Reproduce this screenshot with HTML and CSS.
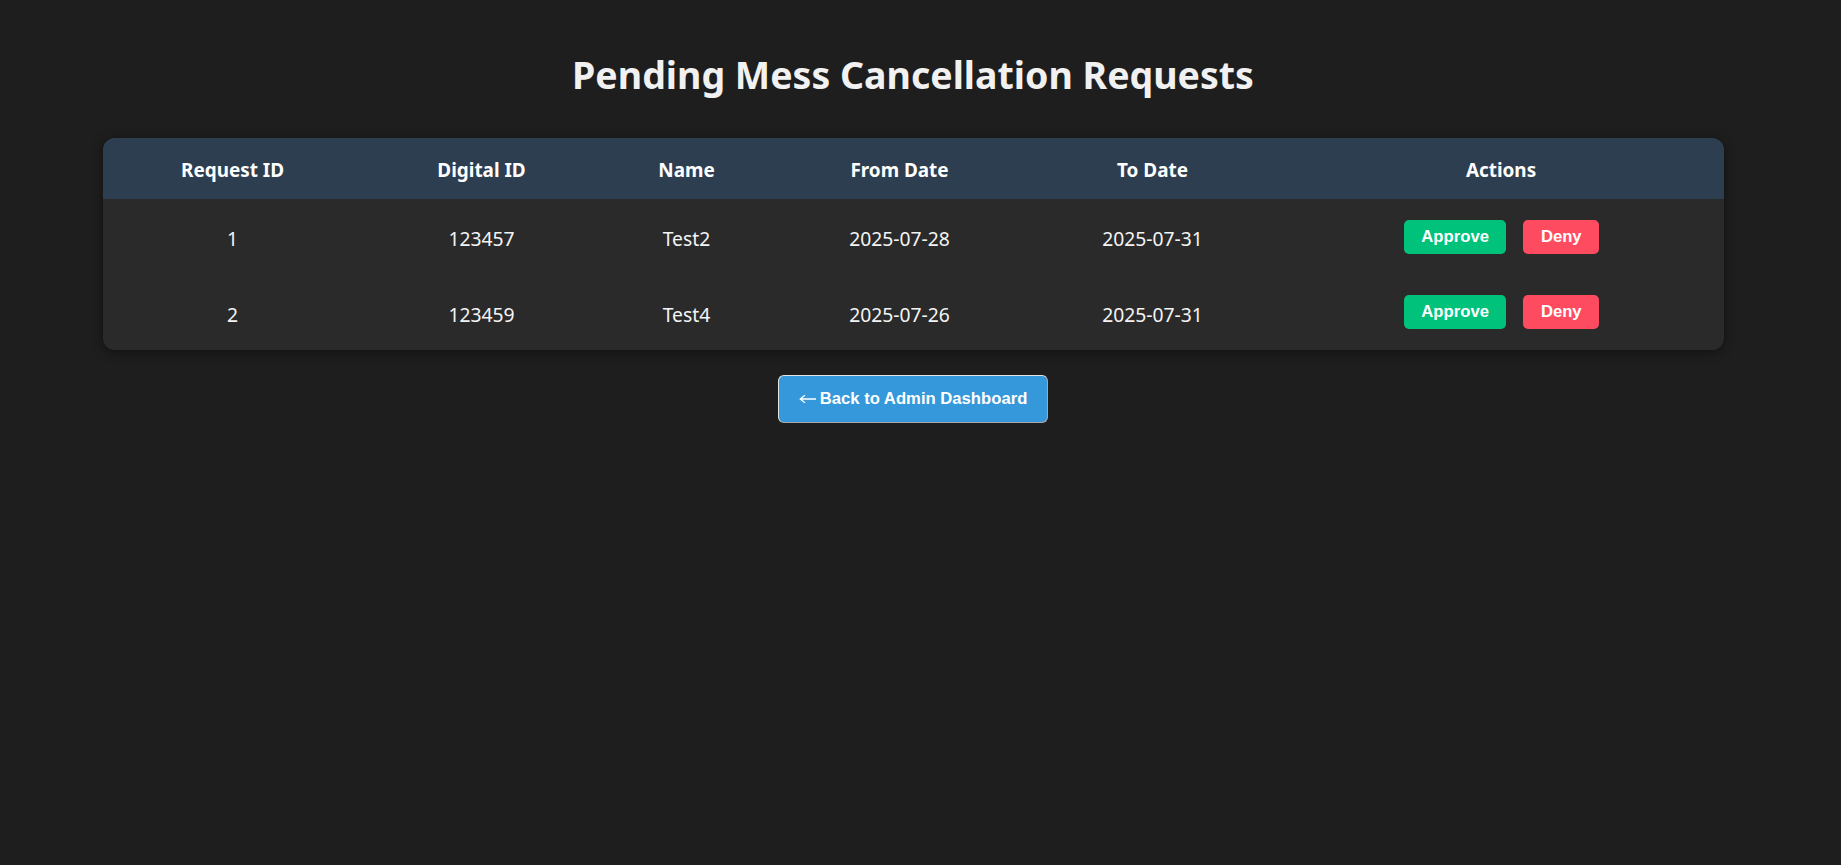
FILE: index.html
```html
<!DOCTYPE html>
<html lang="en">
<head>
<meta charset="utf-8">
<title>Pending Mess Cancellation Requests</title>
<link rel="stylesheet" href="styles.css">
</head>
<body>
<div class="page">
  <h1 class="title">Pending Mess Cancellation Requests</h1>
  <table class="requests">
    <colgroup>
      <col class="c1"><col class="c2"><col class="c3"><col class="c4"><col class="c5"><col class="c6">
    </colgroup>
    <thead>
      <tr>
        <th>Request ID</th>
        <th>Digital ID</th>
        <th>Name</th>
        <th>From Date</th>
        <th>To Date</th>
        <th>Actions</th>
      </tr>
    </thead>
    <tbody>
      <tr>
        <td>1</td>
        <td>123457</td>
        <td>Test2</td>
        <td>2025-07-28</td>
        <td>2025-07-31</td>
        <td class="action-cell"><div class="actions"><button class="btn approve">Approve</button><button class="btn deny">Deny</button></div></td>
      </tr>
      <tr>
        <td>2</td>
        <td>123459</td>
        <td>Test4</td>
        <td>2025-07-26</td>
        <td>2025-07-31</td>
        <td class="action-cell"><div class="actions"><button class="btn approve">Approve</button><button class="btn deny">Deny</button></div></td>
      </tr>
    </tbody>
  </table>
  <div class="back-wrap">
    <button class="back-btn"><svg class="arrow" width="17" height="10" viewBox="0 0 17 10" aria-hidden="true"><path d="M1 5H17M6 1.3L1.2 5L6 8.7" fill="none" stroke="#ffffff" stroke-width="1.3"/></svg>Back to Admin Dashboard</button>
  </div>
</div>
</body>
</html>
```

FILE: styles.css
```css
html, body {
  margin: 0;
  padding: 0;
  background: #1e1e1e;
}

body {
  font-family: "Noto Sans", "Open Sans", sans-serif;
  color: #f2f2f2;
}

.page {
  width: 1826px;
  padding-top: 52px;
}

.title {
  margin: 0 0 40px;
  font-size: 37.5px;
  line-height: 46px;
  font-weight: 700;
  text-align: center;
  color: #f1f1f1;
}

.requests {
  width: 1621px;
  margin: 0 auto;
  table-layout: fixed;
  border-collapse: collapse;
  border-radius: 12px;
  overflow: hidden;
  background: #2a2a2a;
  box-shadow: 0 2px 12px rgba(0, 0, 0, 0.45);
}

.c1 { width: 260px; }
.c2 { width: 238px; }
.c3 { width: 172px; }
.c4 { width: 254px; }
.c5 { width: 252px; }
.c6 { width: 445px; }

.requests th,
.requests td {
  box-sizing: border-box;
}

.requests th {
  height: 61px;
  padding: 2px 0 0;
  background: #2d3e51;
  color: #ffffff;
  font-size: 18.9px;
  font-weight: 700;
  text-align: center;
}

.requests td {
  height: 75.5px;
  padding: 4px 0 0;
  font-size: 19.3px;
  text-align: center;
  color: #f4f4f4;
}

.requests td.action-cell {
  padding: 0;
}

.actions {
  display: flex;
  justify-content: center;
  gap: 17px;
  padding-left: 1px;
}

.btn {
  height: 34px;
  padding: 0 17.5px;
  border: none;
  border-radius: 5px;
  font-family: "Liberation Sans", Arial, sans-serif;
  font-size: 16.67px;
  font-weight: 700;
  color: #ffffff;
}

.approve { background: #00c27a; }
.deny { background: #ff4b5f; }

.back-wrap {
  display: flex;
  justify-content: center;
  margin-top: 25px;
}

.back-btn {
  width: 270px;
  height: 48px;
  padding: 0;
  border: 1px solid;
  border-color: #e4e4e4 #a8a8a8 #a8a8a8 #e4e4e4;
  border-radius: 6px;
  background: #3498db;
  font-family: "Liberation Sans", Arial, sans-serif;
  font-size: 16.67px;
  font-weight: 700;
  color: #ffffff;
}

.arrow {
  display: inline-block;
  vertical-align: 0;
  margin-right: 4px;
}
```
